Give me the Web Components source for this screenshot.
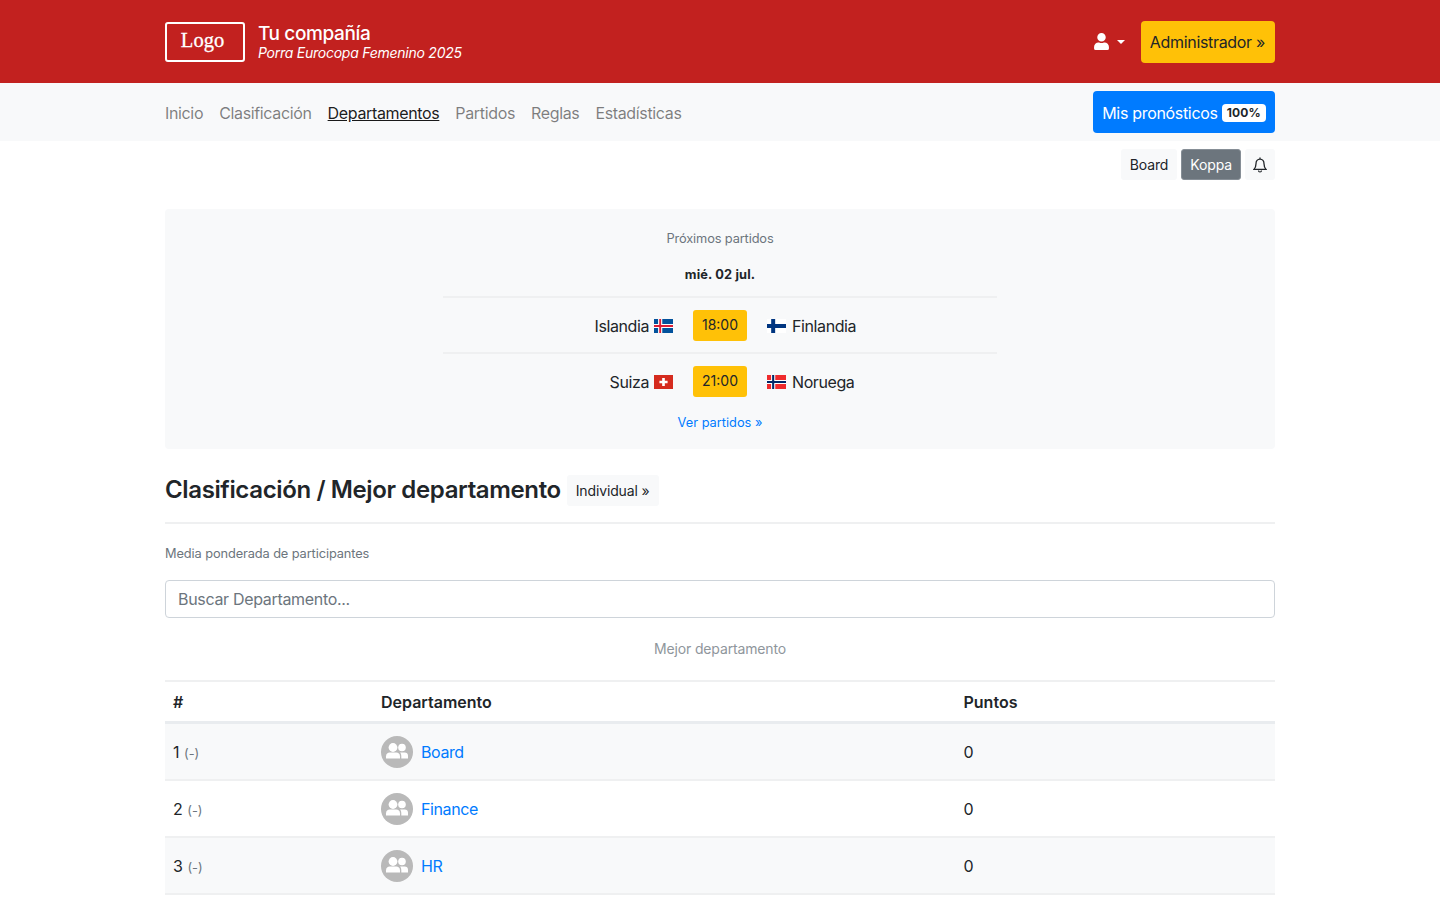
<!DOCTYPE html>
<html lang="es">
<head>
<meta charset="utf-8">
<title>Porra Eurocopa Femenino 2025</title>
<style>
  html, body { margin: 0; background: #fff; }
  body { font-family: Inter, "Liberation Sans", sans-serif; font-size: 16px; line-height: 24px; color: #212529; height: 900px; overflow: hidden; }
</style>
</head>
<body>
<app-header title-text="Tu compañía" subtitle="Porra Eurocopa Femenino 2025"></app-header>
<app-nav>
  <a href="#">Inicio</a>
  <a href="#">Clasificación</a>
  <a href="#" class="active">Departamentos</a>
  <a href="#">Partidos</a>
  <a href="#">Reglas</a>
  <a href="#">Estadísticas</a>
</app-nav>
<league-tabs></league-tabs>
<next-matches>
  <match-row home="Islandia" home-flag="is" time="18:00" away="Finlandia" away-flag="fi"></match-row>
  <match-row home="Suiza" home-flag="ch" time="21:00" away="Noruega" away-flag="no"></match-row>
</next-matches>
<standings-panel>
  <dept-row rank="1" name="Board"></dept-row>
  <dept-row rank="2" name="Finance"></dept-row>
  <dept-row rank="3" name="HR"></dept-row>
</standings-panel>

<script>
const FLAGS = {
  is: `<rect width="20" height="15" fill="#02529c"/><path d="M0 7.5h20M6.5 0v15" stroke="#fff" stroke-width="4.4"/><path d="M0 7.5h20M6.5 0v15" stroke="#dc1e35" stroke-width="2"/>`,
  fi: `<rect width="20" height="15" fill="#fff"/><path d="M0 7.5h20M6.5 0v15" stroke="#003580" stroke-width="4.2"/>`,
  ch: `<rect width="20" height="15" fill="#d52b1e"/><path d="M10 3.2v8.6M5.7 7.5h8.6" stroke="#fff" stroke-width="2.8"/>`,
  no: `<rect width="20" height="15" fill="#ef2b2d"/><path d="M0 7.5h20M6.5 0v15" stroke="#fff" stroke-width="4.4"/><path d="M0 7.5h20M6.5 0v15" stroke="#002868" stroke-width="2.2"/>`
};

function define(name, html) {
  class El extends HTMLElement {
    constructor() {
      super();
      this.attachShadow({ mode: "open" });
    }
    connectedCallback() {
      const attr = (k) => this.getAttribute(k) || "";
      this.shadowRoot.innerHTML = typeof html === "function" ? html(attr) : html;
    }
  }
  customElements.define(name, El);
}

define("app-header", (a) => `
  <style>
    :host { display: block; background: #c2211f; color: #fff; }
    .wrap { width: 1110px; height: 83px; margin: 0 auto; display: flex; align-items: center; }
    .logo { box-sizing: border-box; width: 80px; height: 40px; border: 2px solid #fff; border-radius: 3px; display: flex; align-items: center; justify-content: center; font: 500 20.5px/1 "Liberation Serif", serif; -webkit-text-stroke: .3px #fff; margin-right: 13px; padding: 0 5px 2px 0; }
    .brand { display: flex; flex-direction: column; }
    .name { font-size: 19px; font-weight: 500; line-height: 23px; letter-spacing: -0.02em; }
    .sub { font-size: 14px; line-height: 17px; margin-top: -1px; font-style: italic; letter-spacing: -0.018em; }
    .user { margin-left: auto; display: flex; align-items: center; gap: 8px; margin-right: 16px; }
    .caret { width: 0; height: 0; border-top: 4.8px solid #fff; border-left: 4.8px solid transparent; border-right: 4.8px solid transparent; }
    .admin { background: #ffc107; color: #212529; border-radius: 4px; height: 42px; padding: 0 10px 0 9px; display: flex; align-items: center; font-size: 16px; letter-spacing: -0.02em; }
  </style>
  <div class="wrap">
    <div class="logo">Logo</div>
    <div class="brand"><span class="name">${a("title-text")}</span><span class="sub">${a("subtitle")}</span></div>
    <div class="user">
      <svg width="15" height="17" viewBox="0 0 448 512" fill="#fff"><path d="M224 256a128 128 0 1 0 0-256 128 128 0 0 0 0 256zm89.600 32h-16.700a174.100 174.100 0 0 1-145.800 0h-16.700A134.400 134.400 0 0 0 0 422.400V464a48 48 0 0 0 48 48h352a48 48 0 0 0 48-48v-41.600A134.400 134.400 0 0 0 313.600 288z"/></svg>
      <span class="caret"></span>
    </div>
    <div class="admin">Administrador »</div>
  </div>`);

define("app-nav", `
  <style>
    :host { display: block; background: #f8f9fa; }
    .wrap { width: 1110px; height: 58px; margin: 0 auto; display: flex; align-items: center; }
    .links { display: flex; gap: 16px; padding-top: 2px; }
    ::slotted(a) { color: rgba(0,0,0,.5); text-decoration: none; font-size: 16px; letter-spacing: -0.35px; }
    ::slotted(a.active) { color: rgba(0,0,0,.9); text-decoration: underline; }
    .cta { margin-left: auto; background: #007bff; color: #fff; height: 42px; box-sizing: border-box; border-radius: 4px; padding: 2px 9px 0; display: flex; align-items: center; gap: 4px; letter-spacing: -0.02em; }
    .badge { background: #fff; color: #212529; font-size: 12px; font-weight: 700; line-height: 12px; padding: 3px 5px; border-radius: 4px; letter-spacing: .2px; }
  </style>
  <div class="wrap">
    <div class="links"><slot></slot></div>
    <div class="cta">Mis pronósticos <span class="badge">100%</span></div>
  </div>`);

define("league-tabs", `
  <style>
    :host { display: block; }
    .wrap { width: 1110px; margin: 0 auto; padding-top: 8px; height: 68px; box-sizing: border-box; display: flex; justify-content: flex-end; align-items: flex-start; gap: 4px; }
    .b { height: 31px; box-sizing: border-box; padding: 0 9px; border-radius: 3px; font-size: 14px; letter-spacing: -0.01em; display: flex; align-items: center; background: #f8f9fa; color: #212529; }
    .on { background: #6c757d; color: #fff; border: 1px solid #868e96; padding: 0 8px; }
    .bell { padding: 0 8px; }
  </style>
  <div class="wrap">
    <span class="b">Board</span><span class="b on">Koppa</span>
    <span class="b bell"><svg width="14" height="16" viewBox="0 0 14 16" fill="none" stroke="#212529" stroke-width="1.300"><path d="M7 .5v1.500M7 2.200c-2.500 0-4 2-4 4.500 0 3-1 4.500-2 5.700h12c-1-1.200-2-2.700-2-5.700 0-2.500-1.500-4.500-4-4.500z"/><path d="M5.500 13.500a1.500 1.500 0 0 0 3 0" stroke-width="1.200"/></svg></span>
  </div>`);

define("next-matches", `
  <style>
    :host { display: block; width: 1110px; margin: 0 auto; background: #f8f9fa; border-radius: 4px; height: 240px; box-sizing: border-box; padding-top: 20px; text-align: center; font-size: 12.800px; }
    .title { color: #6c757d; line-height: 19px; letter-spacing: -0.01em; }
    .date { font-weight: 700; line-height: 19px; margin-top: 17px; margin-bottom: 12px; color: #212529; letter-spacing: .15px; }
    .rows { width: 554px; margin: 0 auto; }
    a { display: block; color: #007bff; text-decoration: none; line-height: 19px; margin-top: 5px; }
  </style>
  <div class="title">Próximos partidos</div>
  <div class="date">mié. 02 jul.</div>
  <div class="rows"><slot></slot></div>
  <a href="#">Ver partidos »</a>`);

define("match-row", (a) => `
  <style>
    :host { display: block; border-top: 2px solid #eff0f1; height: 54px; }
    .row { display: grid; grid-template-columns: 1fr 54px 1fr; column-gap: 20px; height: 54px; align-items: center; font-size: 16px; letter-spacing: -0.4px; color: #212529; }
    .team { display: flex; align-items: center; gap: 5px; padding-top: 2px; }
    .away { gap: 6px; }
    .home { justify-content: flex-end; }
    .time { background: #ffc107; border-radius: 3px; height: 31px; display: flex; align-items: center; justify-content: center; font-size: 14px; letter-spacing: 0; color: #212529; }
    svg { display: block; }
  </style>
  <div class="row">
    <div class="team home">${a("home")} <svg width="19" height="14" viewBox="0 0 20 15" preserveAspectRatio="none">${FLAGS[a("home-flag")]}</svg></div>
    <div class="time">${a("time")}</div>
    <div class="team away"><svg width="19" height="14" viewBox="0 0 20 15" preserveAspectRatio="none">${FLAGS[a("away-flag")]}</svg> ${a("away")}</div>
  </div>`);

define("standings-panel", `
  <style>
    :host { display: block; width: 1110px; margin: 0 auto; }
    .head { display: flex; align-items: flex-start; gap: 6px; padding-top: 26px; height: 75px; box-sizing: border-box; border-bottom: 2px solid #eff0f1; }
    h2 { margin: 0; font-size: 24px; font-weight: 600; line-height: 29px; letter-spacing: -0.37px; }
    .ind { background: #f8f9fa; border-radius: 3px; height: 31px; padding: 0 9px; display: flex; align-items: center; font-size: 14px; letter-spacing: -0.01em; }
    .note { font-size: 12.800px; color: #6c757d; line-height: 19px; margin-top: 20px; letter-spacing: -0.1px; }
    .search { box-sizing: border-box; height: 38px; margin-top: 17px; border: 1px solid #ced4da; border-radius: 4px; padding: 0 12px; display: flex; align-items: center; color: #6c757d; letter-spacing: -0.02em; }
    .cap { text-align: center; font-size: 14px; color: #8f969c; line-height: 21px; margin-top: 20px; letter-spacing: -0.01em; }
    .cols { display: grid; grid-template-columns: 208px 582.500px 1fr; margin-top: 21px; border-top: 2px solid #eff0f1; border-bottom: 3px solid #e9ecef; height: 44px; box-sizing: border-box; align-items: center; font-weight: 600; }
    .cols span { padding-left: 8px; }
  </style>
  <div class="head"><h2>Clasificación / Mejor departamento</h2><span class="ind">Individual »</span></div>
  <div class="note">Media ponderada de participantes</div>
  <div class="search">Buscar Departamento...</div>
  <div class="cap">Mejor departamento</div>
  <div class="cols"><span>#</span><span>Departamento</span><span>Puntos</span></div>
  <slot></slot>`);

define("dept-row", (a) => `
  <style>
    :host { display: block; }
    .row { display: grid; grid-template-columns: 208px 582.500px 1fr; height: 57px; box-sizing: border-box; border-bottom: 2px solid #eff0f1; align-items: center; background: ${a("rank") === "2" ? "#fff" : "#f8f9fa"}; letter-spacing: -0.4px; }
    .row > div { padding-left: 8px; }
    .row > .rank { padding-top: 2px; letter-spacing: 0; }
    .dim { font-size: 12.800px; color: #6c757d; }
    .dept { display: flex; align-items: center; gap: 8px; }
    .av { width: 32px; height: 32px; border-radius: 50%; background: #b9b9b9; display: block; }
    a { color: #007bff; text-decoration: none; }
  </style>
  <div class="row">
    <div class="rank">${a("rank")} <span class="dim">(-)</span></div>
    <div class="dept">
      <svg class="av" viewBox="0 0 32 32" fill="#fff"><circle cx="12" cy="11.500" r="4.400"/><circle cx="21" cy="11.500" r="3.800"/><path d="M5 22.500v-2.300c0-2.400 1.800-3.700 3.700-3.700h6.600c1.900 0 3.700 1.300 3.700 3.700v2.300z"/><path d="M20.300 22.500v-2.600c0-1.300-.400-2.500-1.200-3.400h4.700c1.800 0 3.200 1.200 3.200 3.200v2.800z"/></svg>
      <a href="#">${a("name")}</a>
    </div>
    <div>0</div>
  </div>`);
</script>
</body>
</html>
